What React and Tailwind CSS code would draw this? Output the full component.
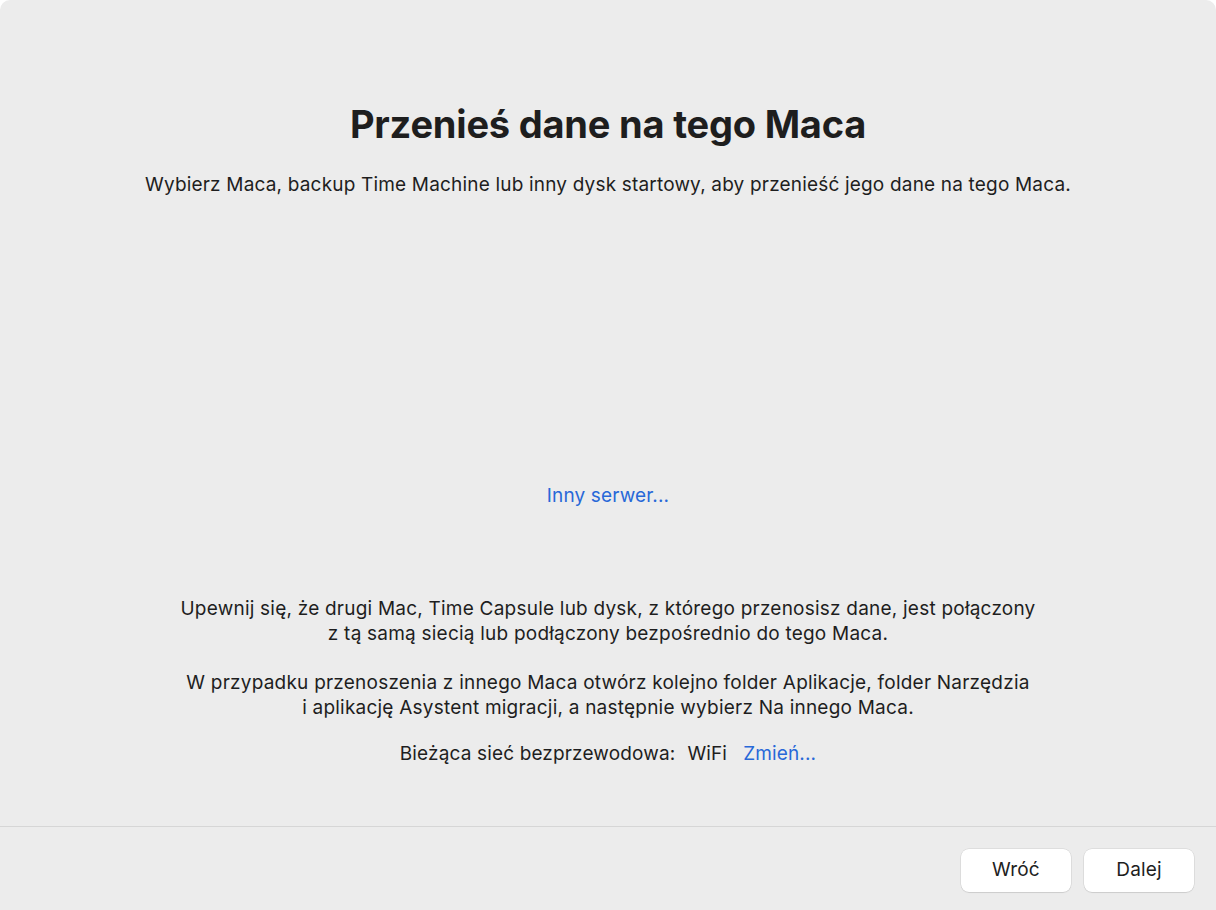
import React from 'react'

const font = { fontFamily: 'Inter, "Noto Sans", sans-serif' }

const App = () => {
  return (
    <div className="w-[1216px] h-[910px] bg-white" style={font}>
      <div className="w-full h-full bg-[#ececec] rounded-t-[10px] flex flex-col text-[#1e1e1e]">
        <div className="flex-1 flex flex-col items-center">
          <h1 className="mt-[100px] text-[38px] leading-[48px] font-bold tracking-[-0.2px]">
            Przenieś dane na tego Maca
          </h1>
          <p className="mt-[25px] text-[19px] leading-[24px] tracking-[0.18px]">
            Wybierz Maca, backup Time Machine lub inny dysk startowy, aby przenieść jego dane na tego Maca.
          </p>
          <div className="h-[287px]" />
          <a className="text-[19px] leading-[24px] tracking-[0.15px] text-[#2868d8]">Inny serwer...</a>
          <div className="h-[88px]" />
          <p className="text-[19px] leading-[25px] tracking-[0.22px] text-center">
            Upewnij się, że drugi Mac, Time Capsule lub dysk, z którego przenosisz dane, jest połączony
            <br />
            z tą samą siecią lub podłączony bezpośrednio do tego Maca.
          </p>
          <p className="mt-[24px] text-[19px] leading-[25px] tracking-[0.22px] text-center">
            W przypadku przenoszenia z innego Maca otwórz kolejno folder Aplikacje, folder Narzędzia
            <br />
            i aplikację Asystent migracji, a następnie wybierz Na innego Maca.
          </p>
          <div className="mt-[22px] flex items-center text-[19px] leading-[24px] tracking-[0.15px]">
            <span>Bieżąca sieć bezprzewodowa:</span>
            <span className="ml-[12px]">WiFi</span>
            <a className="ml-[16px] text-[#2868d8]">Zmień...</a>
          </div>
        </div>
        <div className="h-[84px] pt-[3px] border-t border-[#d6d6d6] flex items-center justify-end gap-[13px] pr-[22px]">
          <button className="w-[110px] h-[43px] rounded-[8px] bg-white text-[19px] tracking-[0.15px] shadow-[0_0_0_0.5px_rgba(0,0,0,0.12),0_1px_1px_rgba(0,0,0,0.08)]">
            Wróć
          </button>
          <button className="w-[110px] h-[43px] rounded-[8px] bg-white text-[19px] tracking-[0.15px] shadow-[0_0_0_0.5px_rgba(0,0,0,0.12),0_1px_1px_rgba(0,0,0,0.08)]">
            Dalej
          </button>
        </div>
      </div>
    </div>
  )
}

export default App
